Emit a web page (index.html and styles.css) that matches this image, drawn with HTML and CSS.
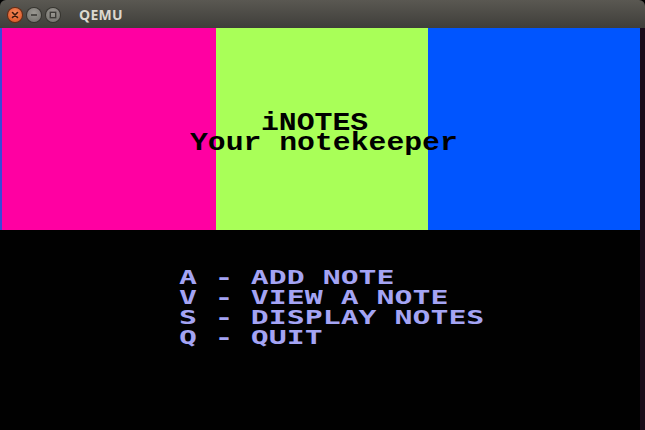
FILE: index.html
```html
<!DOCTYPE html>
<html>
<head>
<meta charset="utf-8">
<link rel="stylesheet" href="styles.css">
</head>
<body>
<div class="window">
  <div class="titlebar">
    <div class="btn close">
      <svg width="14" height="14" viewBox="0 0 14 14"><path d="M4.5 4.5 L9.5 9.5 M9.5 4.5 L4.5 9.5" stroke="#3a1a0c" stroke-width="1.6" stroke-linecap="round"/></svg>
    </div>
    <div class="btn">
      <svg width="14" height="14" viewBox="0 0 14 14"><path d="M4 7 H10" stroke="#3c3b37" stroke-width="1.6"/></svg>
    </div>
    <div class="btn">
      <svg width="14" height="14" viewBox="0 0 14 14"><rect x="4.3" y="4.3" width="5.4" height="5.4" fill="none" stroke="#3c3b37" stroke-width="1.4"/></svg>
    </div>
    <div class="title">QEMU</div>
  </div>
  <div class="screen">
    <div class="display">
      <div class="stripes">
        <div class="stripe pink"></div>
        <div class="stripe green"></div>
        <div class="stripe blue"></div>
        <div class="heading">
          <div class="hline l1"><span>iNOTES</span></div>
          <div class="hline l2"><span>Your notekeeper</span></div>
        </div>
      </div>
      <div class="menu">
        <div class="mline"><span>A - ADD NOTE</span></div>
        <div class="mline"><span>V - VIEW A NOTE</span></div>
        <div class="mline"><span>S - DISPLAY NOTES</span></div>
        <div class="mline"><span>Q - QUIT</span></div>
      </div>
    </div>
    <div class="edge"></div>
  </div>
</div>
</body>
</html>
```
FILE: styles.css
```css
html, body {
  margin: 0;
  padding: 0;
  background: #2b2a27;
}
.window {
  width: 645px;
  height: 430px;
  display: flex;
  flex-direction: column;
  background: #010101;
  overflow: hidden;
}
.titlebar {
  height: 28px;
  flex: none;
  display: flex;
  align-items: center;
  padding-left: 8px;
  gap: 5px;
  background: linear-gradient(#5a5852, #3f3e3a);
  border-radius: 6px 6px 0 0;
  box-sizing: border-box;
  padding-top: 1px;
}
.btn {
  width: 14px;
  height: 14px;
  border-radius: 50%;
  background: radial-gradient(circle at 50% 35%, #9a9892, #6f6e69);
  box-shadow: 0 0 0 1px #35342f;
  display: flex;
}
.btn.close {
  background: radial-gradient(circle at 50% 35%, #f58a5a, #d9501c);
  box-shadow: 0 0 0 1px #6b2a10;
}
.title {
  margin-left: 14px;
  font-family: "Open Sans", "DejaVu Sans", sans-serif;
  font-weight: 700;
  font-size: 14px;
  color: #dcd8cf;
  letter-spacing: 0.3px;
}
.screen {
  flex: 1;
  display: flex;
}
.display {
  width: 640px;
  display: flex;
  flex-direction: column;
}
.edge {
  width: 5px;
  background: #1a0b19;
}
.stripes {
  height: 202px;
  display: grid;
  grid-template-columns: 216px 212px 212px;
  grid-template-rows: 202px;
}
.stripe { grid-row: 1; }
.pink { grid-column: 1; background: #ff00a2; border-left: 2px solid #3a4ad8; }
.green { grid-column: 2; background: #a9ff58; }
.blue { grid-column: 3; background: #0055ff; }
.heading {
  grid-row: 1;
  grid-column: 1 / -1;
  padding-top: 86px;
  font-family: "Liberation Mono", "Courier New", monospace;
  font-weight: 700;
  font-size: 25px;
  line-height: 20px;
  color: #000;
}
.hline {
  height: 20px;
  white-space: pre;
}
.hline span {
  display: inline-block;
  transform: scaleX(1.19);
  transform-origin: 0 0;
}
.l1 { padding-left: 261px; }
.l2 { padding-left: 190px; }
.menu {
  padding-top: 37px;
  padding-left: 179px;
  font-family: "DejaVu Sans Mono", monospace;
  font-weight: 700;
  font-size: 19px;
  line-height: 20px;
  color: #a4a4f4;
}
.mline {
  height: 20px;
  white-space: pre;
}
.mline span {
  display: inline-block;
  transform: scaleX(1.57);
  transform-origin: 0 0;
}
```
